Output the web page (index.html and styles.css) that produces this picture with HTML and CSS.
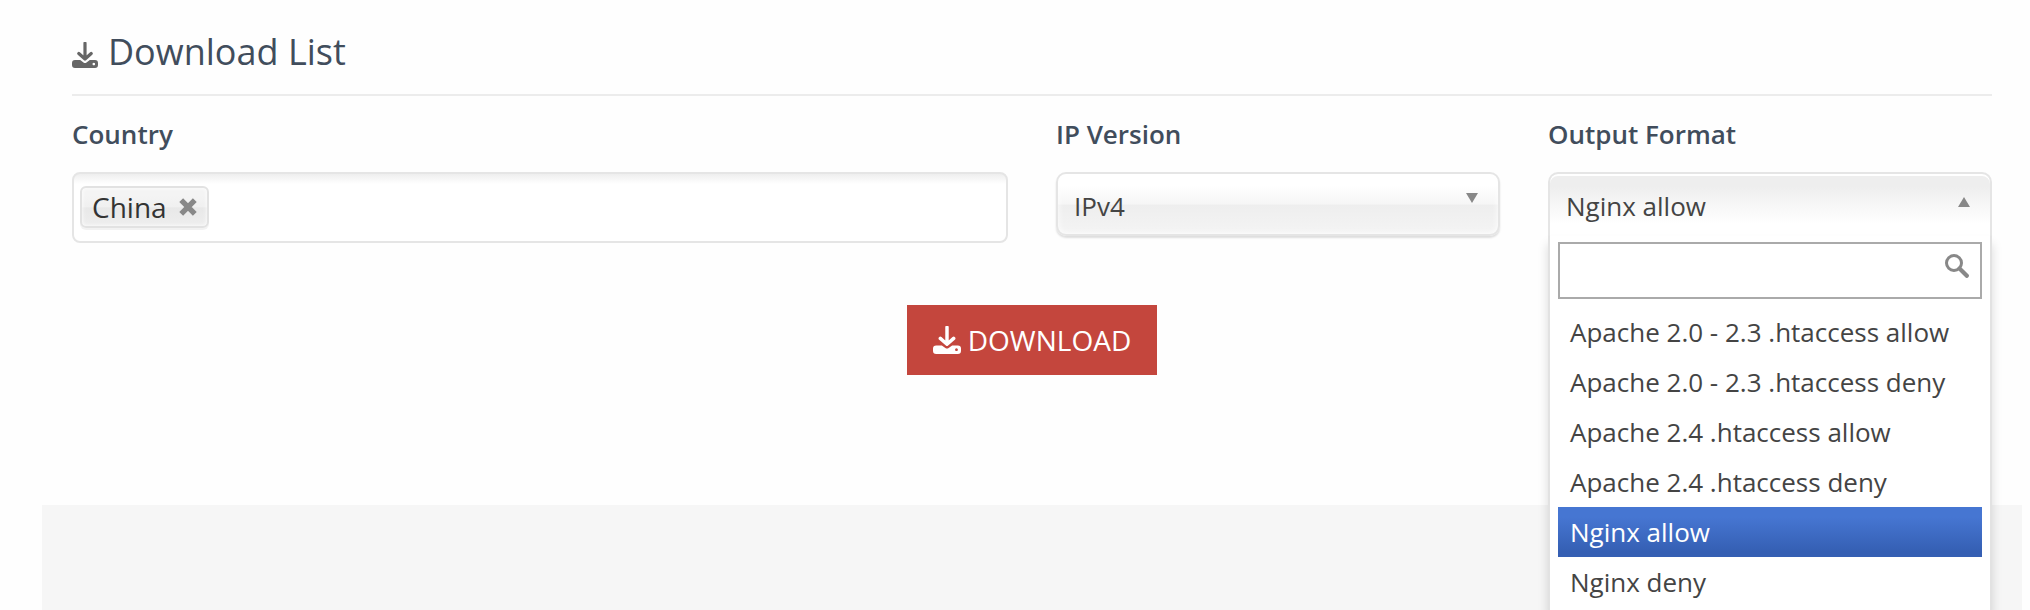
FILE: index.html
```html
<!DOCTYPE html>
<html lang="en">
<head>
<meta charset="utf-8">
<title>Download List</title>
<link rel="stylesheet" href="styles.css">
</head>
<body>
<main class="panel">
  <h3 class="heading">
    <svg class="heading-icon" viewBox="0 0 26 26"><path d="M13 1.2V16M6.800 11.500l6.200 5.500 6.200-5.500" fill="none" stroke="currentColor" stroke-width="3.200" stroke-linecap="round" stroke-linejoin="round"/><path fill="currentColor" fill-rule="evenodd" d="M3 18h5.200l3.300 2.500q1.500 1 3 0L17.800 18H23q3 0 3 3v2q0 3-3 3H3q-3 0-3-3v-2q0-3 3-3zM21.800 20.700a1.300 1.300 0 1 0 .01 0z"/></svg>
    <span>Download List</span>
  </h3>
  <form class="fields">
    <div class="field">
      <label class="label">Country</label>
      <div class="multi">
        <span class="chip">China<svg class="chip-close" viewBox="0 0 18 18"><path d="M2.200 2.200l13.600 13.600M15.800 2.200L2.200 15.800" stroke="#888" stroke-width="5.400"/></svg></span>
      </div>
    </div>
    <div class="field">
      <label class="label">IP Version</label>
      <div class="select"><span>IPv4</span><svg class="arrow" viewBox="0 0 12 10"><path d="M0 0h12L6 10z" fill="#888"/></svg></div>
    </div>
    <div class="field output">
      <label class="label">Output Format</label>
      <div class="select open"><span>Nginx allow</span><svg class="arrow" viewBox="0 0 12 10"><path d="M0 10h12L6 0z" fill="#888"/></svg></div>
      <div class="drop">
        <div class="search"><svg class="search-icon" viewBox="0 0 24 24"><circle cx="9" cy="9" r="7.500" fill="none" stroke="#888" stroke-width="3"/><path d="M14.500 14.500l7.300 7.300" stroke="#888" stroke-width="4.200" stroke-linecap="round"/></svg></div>
        <ul class="options">
          <li>Apache 2.0 - 2.3 .htaccess allow</li>
          <li>Apache 2.0 - 2.3 .htaccess deny</li>
          <li>Apache 2.4 .htaccess allow</li>
          <li>Apache 2.4 .htaccess deny</li>
          <li class="active">Nginx allow</li>
          <li>Nginx deny</li>
        </ul>
      </div>
    </div>
  </form>
  <button class="download" type="button">
    <svg class="download-icon" viewBox="0 0 26 26"><path d="M13 1.200V16M6.800 11.500l6.200 5.500 6.200-5.500" fill="none" stroke="currentColor" stroke-width="3.200" stroke-linecap="round" stroke-linejoin="round"/><path fill="currentColor" fill-rule="evenodd" d="M3 18h5.200l3.300 2.500q1.500 1 3 0L17.800 18H23q3 0 3 3v2q0 3-3 3H3q-3 0-3-3v-2q0-3 3-3zM21.800 20.700a1.300 1.300 0 1 0 .01 0z"/></svg>
    <span>DOWNLOAD</span>
  </button>
</main>
<footer class="footer"></footer>
</body>
</html>
```
FILE: styles.css
```css
* { box-sizing: border-box; }
body {
  margin: 0;
  height: 610px;
  overflow: hidden;
  display: flex;
  flex-direction: column;
  background: #fefefe;
  color: #444;
  font: 26px/30px "Open Sans", "Noto Sans", sans-serif;
}
.panel {
  height: 505px;
  flex: none;
  padding: 0 38px 0 72px;
  display: flex;
  flex-direction: column;
}
.heading {
  margin: 0;
  height: 96px;
  border-bottom: 2px solid #ececec;
  display: flex;
  align-items: flex-start;
  gap: 10px;
  padding-top: 27px;
  color: #414d5c;
  font-size: 36px;
  line-height: 50px;
  font-weight: 400;
}
.heading-icon { width: 26px; height: 26px; margin-top: 15px; color: #666; }
.fields {
  display: grid;
  grid-template-columns: 936px 444px 444px;
  column-gap: 48px;
  padding-top: 20px;
}
.output { position: relative; }
.label {
  display: block;
  height: 56px;
  line-height: 36px;
  color: #414d5c;
  font-weight: 600;
}
.multi {
  height: 71px;
  padding: 12px 6px;
  border: 2px solid #e5e5e5;
  border-radius: 8px;
  background: linear-gradient(#eee 0, #fff 10px);
}
.chip {
  display: inline-flex;
  align-items: center;
  height: 42px;
  padding: 0 10px 1px 10px;
  gap: 12px;
  border: 2px solid #e2e2e2;
  border-radius: 6px;
  background: linear-gradient(#f4f4f4 20%, #f0f0f0 50%, #e8e8e8 52%, #eee);
  box-shadow: inset 0 0 4px #fff, 0 2px 0 rgba(0,0,0,.05);
  color: #333;
  font-size: 28px;
}
.chip-close { width: 18px; height: 18px; }
.select {
  height: 64px;
  padding: 17px 20px 0 16px;
  display: flex;
  justify-content: space-between;
  border: 2px solid #e5e5e5;
  border-radius: 10px;
  background: linear-gradient(#fff 20%, #f6f6f6 50%, #eee 52%, #f4f4f4);
  box-shadow: inset 0 0 6px #fff, 0 2px 2px rgba(0,0,0,.13);
}
.arrow { width: 12px; height: 10px; margin-top: 2px; }
.select.open {
  border-bottom: 0;
  border-radius: 10px 10px 0 0;
  background: linear-gradient(#eee 20%, #fff 80%);
  box-shadow: inset 0 2px 0 #fff;
}
.open .arrow { margin-top: 6px; }
.drop {
  position: absolute;
  top: 120px;
  left: 0;
  width: 444px;
  height: 374px;
  padding: 6px 8px 0;
  border: solid #e2e2e2;
  border-width: 0 2px;
  background: #fff;
  box-shadow: 0 8px 10px rgba(0,0,0,.15);
}
.search {
  height: 57px;
  margin-bottom: 8px;
  padding: 10px 11px;
  display: flex;
  justify-content: flex-end;
  border: 2px solid #aaa;
}
.search-icon { width: 24px; height: 24px; }
.options { margin: 0; padding: 0; list-style: none; }
.options li { height: 50px; padding: 10px 12px; white-space: nowrap; }
.options .active {
  color: #fff;
  background: linear-gradient(#4676d2 20%, #355fb3 90%);
}
.download {
  align-self: center;
  width: 250px;
  height: 70px;
  margin: 62px 0 0;
  padding: 0;
  display: flex;
  align-items: center;
  justify-content: center;
  gap: 7px;
  border: 0;
  background: #c4463d;
  color: #fff;
  font: inherit;
  font-size: 28px;
}
.download-icon { width: 28px; height: 28px; }
.footer { height: 105px; flex: none; margin: 0 8px 0 42px; background: #f6f6f6; }
```
